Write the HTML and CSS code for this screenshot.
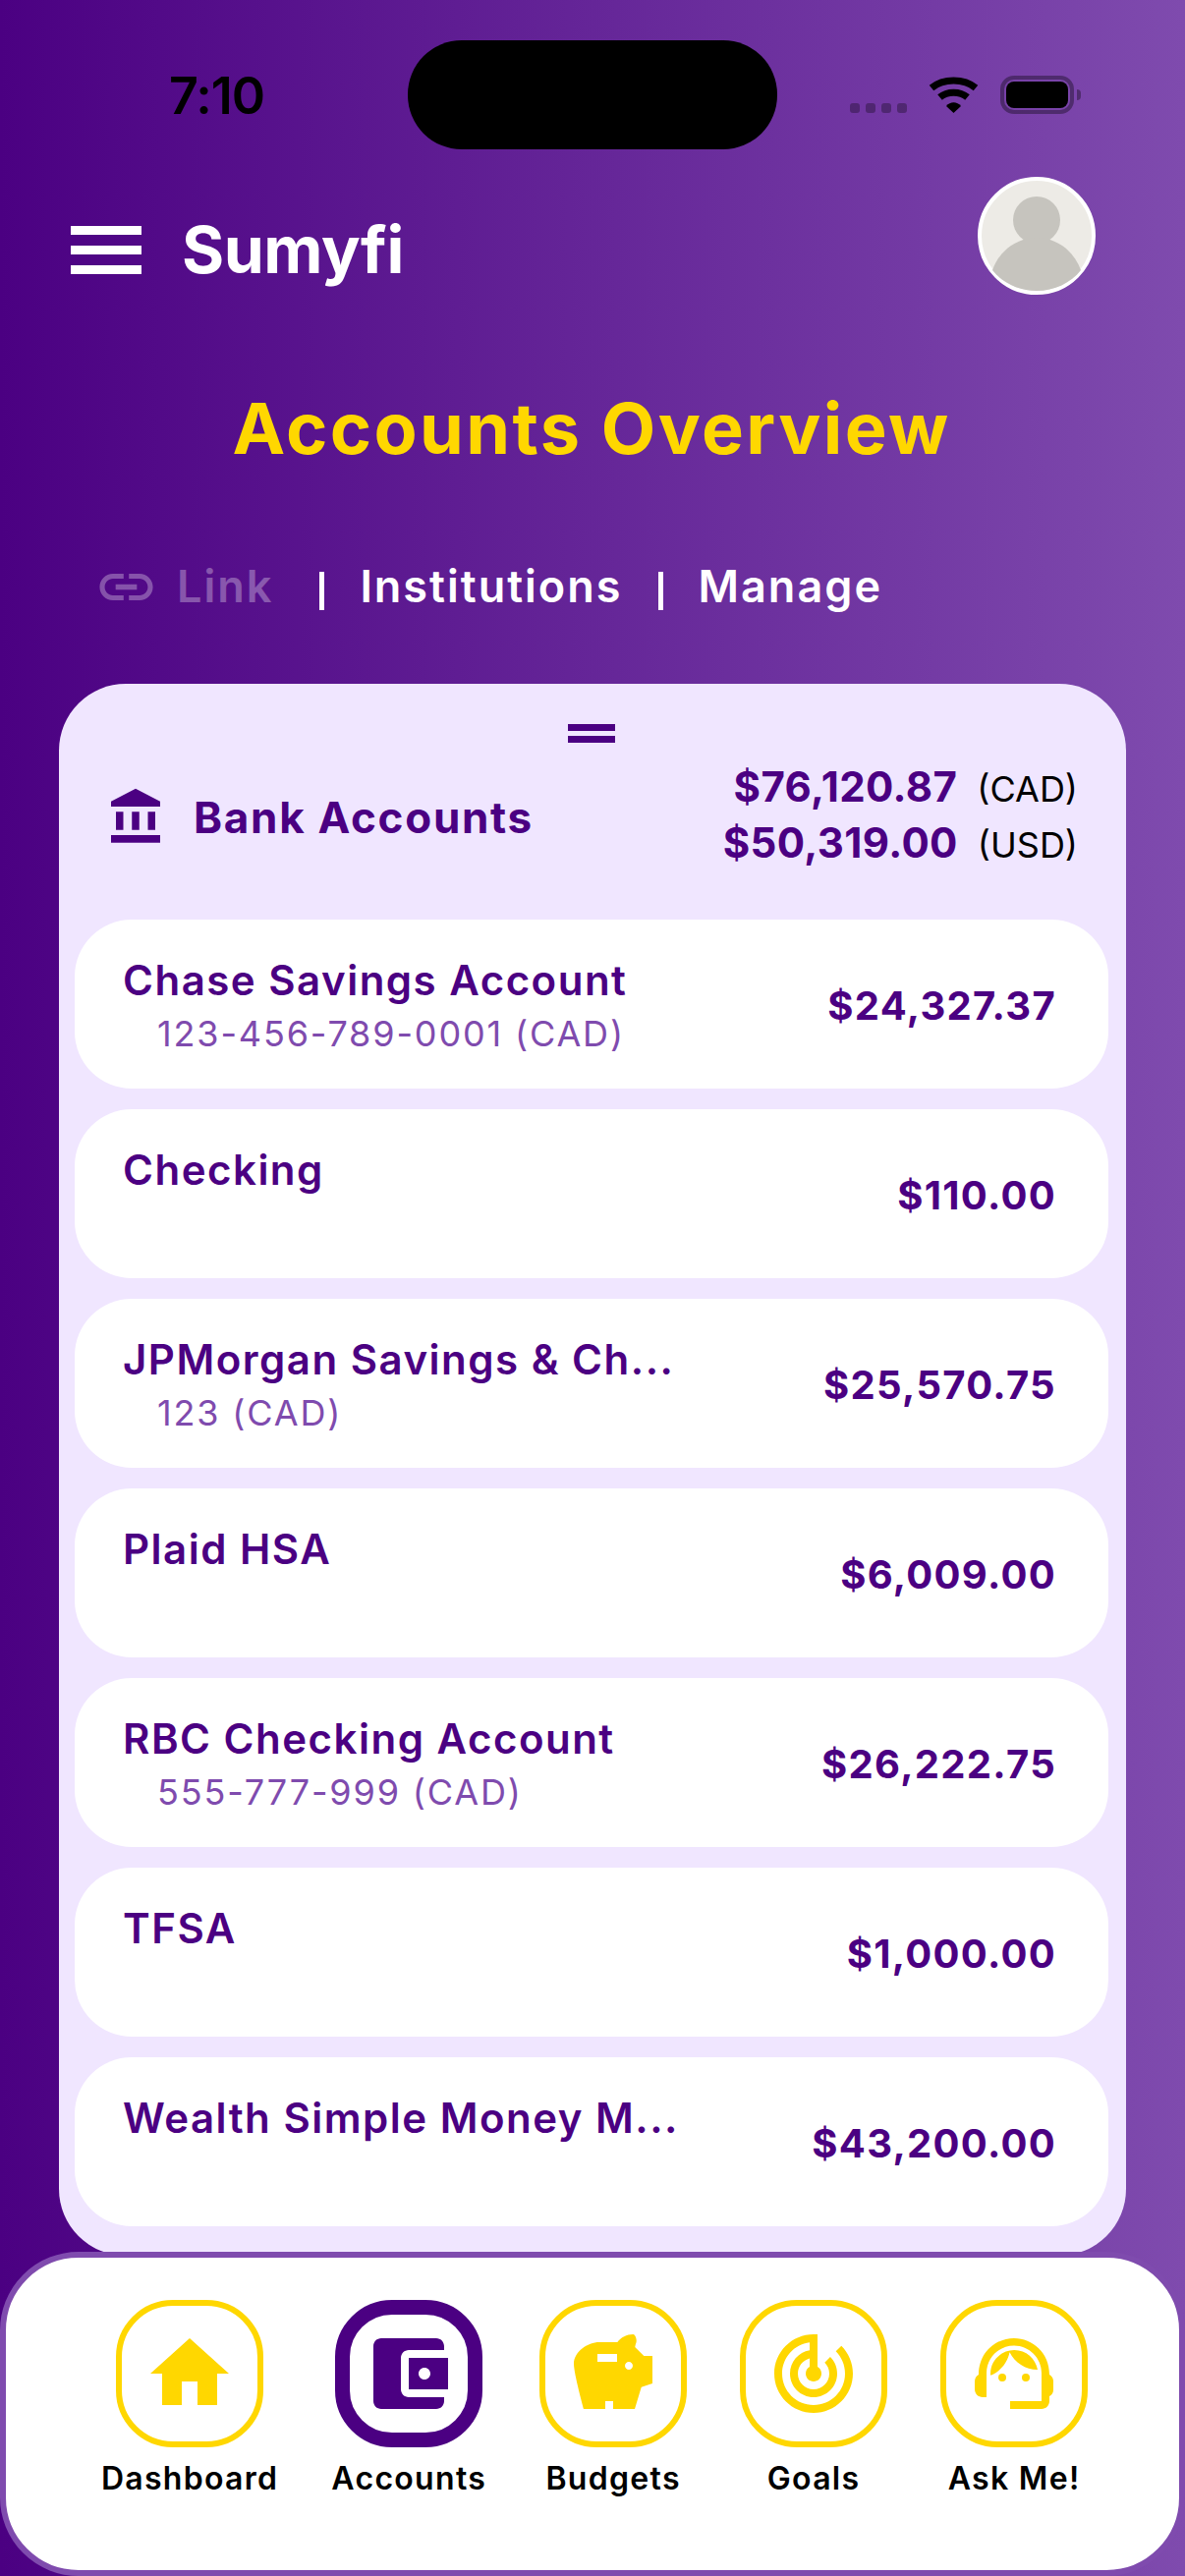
FILE: index.html
```html
<!DOCTYPE html>
<html lang="en">
<head>
    <meta charset="UTF-8">
    <meta name="viewport" content="width=device-width, initial-scale=1.0">
    <title>Sumyfi - Accounts Overview</title>
    <link rel="stylesheet" href="styles.css">
</head>
<body>
    <div class="page">
        <div class="status-bar">
            <div class="time">7:10</div>
            <div class="island"></div>
            <div class="status-icons">
                <div class="signal"><span></span><span></span><span></span><span></span></div>
                <svg class="wifi" width="51" height="37" viewBox="0 0 51 37">
                    <path d="M3 11.5C15 1.5 36 1.5 48 11.5" fill="none" stroke="#000" stroke-width="7"/>
                    <path d="M11.5 21C19 14.5 32 14.5 39.5 21" fill="none" stroke="#000" stroke-width="7"/>
                    <path d="M18 30C22 25 29 25 33 30L25.500 37z"/>
                </svg>
                <div class="battery"><div class="battery-fill"></div></div>
                <div class="battery-cap"></div>
            </div>
        </div>

        <div class="header">
            <div class="brand">
                <div class="menu"><span></span><span></span><span></span></div>
                <div class="logo">Sumyfi</div>
            </div>
            <svg class="avatar" width="120" height="120" viewBox="0 0 120 120">
                <circle cx="60" cy="60" r="58" fill="#edebe6" stroke="#fff" stroke-width="4"/>
                <circle cx="60" cy="44" r="24" fill="#c6c4be"/>
                <path d="M15 95C22 75 40 62 60 62C80 62 98 75 105 95C95 108 78 116 60 116C42 116 25 108 15 95z" fill="#c6c4be"/>
            </svg>
        </div>

        <h1 class="title">Accounts Overview</h1>

        <div class="tabs">
            <div class="tab tab-off">
                <svg class="link-icon" width="65" height="65" viewBox="0 0 24 24" fill="#fff"><path d="M3.9 12c0-1.710 1.390-3.100 3.100-3.100h4V7H7c-2.760 0-5 2.240-5 5s2.240 5 5 5h4v-1.900H7c-1.710 0-3.100-1.390-3.100-3.100zM8 13h8v-2H8v2zm9-6h-4v1.900h4c1.710 0 3.100 1.390 3.100 3.100s-1.390 3.100-3.100 3.100h-4V17h4c2.760 0 5-2.240 5-5s-2.240-5-5-5z"/></svg>
                <span>Link</span>
            </div>
            <div class="sep"></div>
            <div class="tab">Institutions</div>
            <div class="sep"></div>
            <div class="tab">Manage</div>
        </div>

        <div class="card">
            <div class="handle"><span></span><span></span></div>
            <div class="card-head">
                <div class="card-name">
                    <svg class="bank-icon" width="60" height="63" viewBox="0 0 24 24" preserveAspectRatio="none" fill="#4b0082"><path d="M4 10h3v7H4zM10.500 10h3v7h-3zM2 19h20v3H2zM17 10h3v7h-3zM12 1L2 6v2h20V6z"/></svg>
                    <span>Bank Accounts</span>
                </div>
                <div class="totals">
                    <div class="total"><b>$76,120.87</b><span>(CAD)</span></div>
                    <div class="total"><b>$50,319.00</b><span>(USD)</span></div>
                </div>
            </div>

            <div class="rows">
                <div class="row">
                    <div class="row-text">
                        <div class="row-name">Chase Savings Account</div>
                        <div class="row-sub">123-456-789-0001 (CAD)</div>
                    </div>
                    <div class="row-amount">$24,327.37</div>
                </div>
                <div class="row">
                    <div class="row-text">
                        <div class="row-name">Checking</div>
                    </div>
                    <div class="row-amount">$110.00</div>
                </div>
                <div class="row">
                    <div class="row-text">
                        <div class="row-name">JPMorgan Savings &amp; Ch...</div>
                        <div class="row-sub">123 (CAD)</div>
                    </div>
                    <div class="row-amount">$25,570.75</div>
                </div>
                <div class="row">
                    <div class="row-text">
                        <div class="row-name">Plaid HSA</div>
                    </div>
                    <div class="row-amount">$6,009.00</div>
                </div>
                <div class="row">
                    <div class="row-text">
                        <div class="row-name">RBC Checking Account</div>
                        <div class="row-sub">555-777-999 (CAD)</div>
                    </div>
                    <div class="row-amount">$26,222.75</div>
                </div>
                <div class="row">
                    <div class="row-text">
                        <div class="row-name">TFSA</div>
                    </div>
                    <div class="row-amount">$1,000.00</div>
                </div>
                <div class="row">
                    <div class="row-text">
                        <div class="row-name">Wealth Simple Money M...</div>
                    </div>
                    <div class="row-amount">$43,200.00</div>
                </div>
            </div>
        </div>

        <div class="nav">
            <div class="nav-item">
                <div class="nav-icon">
                    <svg width="96" height="96" viewBox="0 0 24 24" fill="#ffd700"><path d="M10 20v-6h4v6h5v-8h3L12 3 2 12h3v8z"/></svg>
                </div>
                <div class="nav-label">Dashboard</div>
            </div>
            <div class="nav-item">
                <div class="nav-icon nav-icon-on">
                    <svg width="96" height="96" viewBox="0 0 24 24" fill="#4b0082"><path d="M21 18v1c0 1.100-.9 2-2 2H5c-1.110 0-2-.9-2-2V5c0-1.100.89-2 2-2h14c1.100 0 2 .9 2 2v1h-9c-1.110 0-2 .9-2 2v8c0 1.100.89 2 2 2h9zm-9-2h10V8H12v8zm4-2.500c-.83 0-1.500-.67-1.500-1.500s.67-1.500 1.500-1.500 1.500.67 1.500 1.500-.67 1.500-1.500 1.500z"/></svg>
                </div>
                <div class="nav-label">Accounts</div>
            </div>
            <div class="nav-item">
                <div class="nav-icon">
                    <svg width="96" height="96" viewBox="0 0 24 24" fill="#ffd700"><path d="M19.830 7.500l-2.270-2.270c.07-.42.18-.81.32-1.150.23-.56-.2-2.080-.8-2.080-1.640 0-3.090.79-4 2H8.500C5.460 4 2 6.460 2 9.500c0 2.500 2.500 11.500 2.500 11.500H10v-2h2v2h5.500l1.680-5.590L22 14.470V7.500h-2.170zM13 9H8V7h5v2zm3 2c-.55 0-1-.45-1-1s.45-1 1-1 1 .45 1 1-.45 1-1 1z"/></svg>
                </div>
                <div class="nav-label">Budgets</div>
            </div>
            <div class="nav-item">
                <div class="nav-icon">
                    <svg width="96" height="96" viewBox="0 0 24 24" fill="#ffd700"><path d="M19.070 4.930l-1.410 1.410C19.100 7.790 20 9.790 20 12c0 4.420-3.580 8-8 8s-8-3.580-8-8c0-4.080 3.050-7.440 7-7.930v2.020C8.160 6.570 6 9.030 6 12c0 3.310 2.690 6 6 6s6-2.690 6-6c0-1.660-.67-3.160-1.760-4.240l-1.410 1.410C15.550 9.900 16 10.900 16 12c0 2.210-1.790 4-4 4s-4-1.790-4-4c0-1.860 1.280-3.410 3-3.860v2.140c-.6.35-1 .98-1 1.720 0 1.100.9 2 2 2s2-.9 2-2c0-.74-.4-1.380-1-1.720V2h-1C6.480 2 2 6.480 2 12s4.480 10 10 10 10-4.480 10-10c0-2.760-1.120-5.260-2.930-7.070z"/></svg>
                </div>
                <div class="nav-label">Goals</div>
            </div>
            <div class="nav-item">
                <div class="nav-icon">
                    <svg width="96" height="96" viewBox="0 0 24 24" fill="#ffd700"><path d="M21 12.220C21 6.730 16.740 3 12 3c-4.690 0-9 3.650-9 9.280-.6.34-1 .98-1 1.720v2c0 1.100.9 2 2 2h1v-6.100c0-3.870 3.130-7 7-7s7 3.130 7 7V19h-8v2h8c1.100 0 2-.9 2-2v-1.220c.59-.31 1-.92 1-1.620v-2.300c0-.67-.41-1.280-1-1.640z"/><circle cx="9" cy="13" r="1"/><circle cx="15" cy="13" r="1"/><path d="M18 11.030C17.520 8.180 15.040 6 12.050 6c-3.030 0-6.290 2.510-6.030 6.450 2.470-1.010 4.330-3.210 4.860-5.890 1.310 2.630 4 4.440 7.120 4.470z"/></svg>
                </div>
                <div class="nav-label">Ask Me!</div>
            </div>
        </div>
    </div>
</body>
</html>
```

FILE: styles.css
```css
* {
    margin: 0;
    padding: 0;
    box-sizing: border-box;
}
html, body {
    width: 1206px;
    height: 2622px;
    overflow: hidden;
    font-family: Inter, "Noto Sans", sans-serif;
}
.page {
    position: relative;
    width: 1206px;
    height: 2622px;
    overflow: hidden;
    background: linear-gradient(90deg, #4b0082 0%, #7f4bae 100%);
}

/* status bar */
.status-bar {
    display: grid;
    grid-template-columns: 415px 376px 1fr;
    align-items: center;
    padding-top: 41px;
    height: 152px;
}
.time {
    padding: 3px 0 0 172px;
    font-size: 52px;
    font-weight: 600;
    line-height: 60px;
    letter-spacing: -1px;
    color: #000;
}
.island {
    height: 111px;
    background: #000;
    border-radius: 55px;
}
.status-icons {
    display: flex;
    align-items: flex-end;
    padding-left: 74px;
    height: 39px;
}
.signal {
    display: flex;
    gap: 6px;
    margin-bottom: 1px;
}
.signal span {
    width: 10px;
    height: 10px;
    border-radius: 3px;
    background: rgba(0,0,0,0.3);
}
.wifi {
    margin-left: 22px;
    margin-bottom: 1px;
}
.battery {
    width: 75px;
    height: 39px;
    margin-left: 22px;
    padding: 2px;
    border: 4px solid rgba(0,0,0,0.35);
    border-radius: 14px;
}
.battery-fill {
    height: 100%;
    background: #000;
    border-radius: 8px;
}
.battery-cap {
    width: 4px;
    height: 11px;
    margin: 0 0 14px 3px;
    background: rgba(0,0,0,0.35);
    border-radius: 0 4px 4px 0;
}

/* header */
.header {
    display: flex;
    justify-content: space-between;
    align-items: flex-start;
    margin-top: 28px;
    padding: 0 91px 0 72px;
}
.brand {
    display: flex;
    align-items: center;
    gap: 41px;
    margin-top: 39px;
}
.menu {
    display: flex;
    flex-direction: column;
    gap: 11px;
    width: 72px;
}
.menu span {
    height: 9px;
    background: #fff;
}
.logo {
    font-size: 66px;
    font-weight: 700;
    line-height: 70px;
    letter-spacing: -0.5px;
    color: #fff;
}

.title {
    margin-top: 92px;
    padding-right: 2px;
    font-size: 72px;
    font-weight: 700;
    line-height: 88px;
    letter-spacing: 2.4px;
    text-align: center;
    color: #ffd700;
}

.tabs {
    display: flex;
    align-items: center;
    margin-top: 87px;
    padding-left: 101px;
    height: 60px;
}
.tab {
    font-size: 45px;
    font-weight: 600;
    line-height: 60px;
    letter-spacing: 2px;
    color: #fff;
}
.tab-off {
    display: flex;
    align-items: center;
    gap: 19px;
    margin-left: -5px;
    opacity: 0.3;
}
.sep {
    width: 5px;
    height: 39px;
    margin: 8px 36px 0 47px;
    background: #fff;
}
.sep + .tab + .sep {
    margin-left: 36px;
}

/* card */
.card {
    margin: 69px 60px 0;
    padding: 41px 18px 30px 16px;
    background: #f0e6ff;
    border-radius: 68px;
}
.handle {
    display: flex;
    flex-direction: column;
    align-items: center;
    gap: 5px;
}
.handle span {
    width: 48px;
    height: 7px;
    background: #4b0082;
}
.card-head {
    display: flex;
    justify-content: space-between;
    align-items: center;
    margin-top: 13px;
    padding: 0 31px 0 37px;
}
.card-name {
    display: flex;
    align-items: center;
    gap: 29px;
    margin-top: 8px;
    margin-left: -5px;
    font-size: 44px;
    font-weight: 700;
    letter-spacing: 1.7px;
    color: #4b0082;
}
.totals {
    display: flex;
    flex-direction: column;
    align-items: flex-end;
    margin-top: 3px;
}
.total {
    display: flex;
    align-items: baseline;
    gap: 20px;
    height: 57px;
    line-height: 57px;
}
.total b {
    font-size: 42px;
    font-weight: 700;
    letter-spacing: 0.4px;
    color: #4b0082;
}
.total span {
    font-size: 36px;
    font-weight: 400;
    color: #000;
}

.rows {
    display: flex;
    flex-direction: column;
    gap: 21px;
    margin-top: 50px;
}
.row {
    display: flex;
    justify-content: space-between;
    align-items: center;
    height: 172px;
    padding: 0 53px 0 49px;
    background: #fff;
    border-radius: 58px;
}
.row-text {
    align-self: flex-start;
    padding-top: 35px;
}
.row-name {
    white-space: nowrap;
    font-size: 42px;
    font-weight: 600;
    line-height: 54px;
    letter-spacing: 1.5px;
    color: #4b0082;
}
.row-sub {
    margin-top: 5px;
    padding-left: 35px;
    font-size: 36px;
    line-height: 44px;
    letter-spacing: 1.85px;
    color: #7f4bae;
}
.row-amount {
    padding-top: 2px;
    font-size: 40px;
    font-weight: 700;
    letter-spacing: 1.3px;
    color: #4b0082;
}

/* bottom nav */
.nav {
    position: absolute;
    left: 0;
    right: 0;
    bottom: 0;
    height: 330px;
    display: flex;
    justify-content: center;
    gap: 54px;
    padding: 43px 0 0 4px;
    background: #fff;
    border: 6px solid #7f4bae;
    border-radius: 80px;
}
.nav-item {
    display: flex;
    flex-direction: column;
    align-items: center;
}
.nav-icon {
    display: flex;
    justify-content: center;
    align-items: center;
    width: 150px;
    height: 150px;
    border: 6px solid #ffd700;
    border-radius: 58px;
}
.nav-icon-on {
    border: 15px solid #4b0082;
}
.nav-label {
    margin-top: 12px;
    font-size: 32px;
    font-weight: 600;
    line-height: 40px;
    letter-spacing: 1.3px;
    color: #000;
}
```
